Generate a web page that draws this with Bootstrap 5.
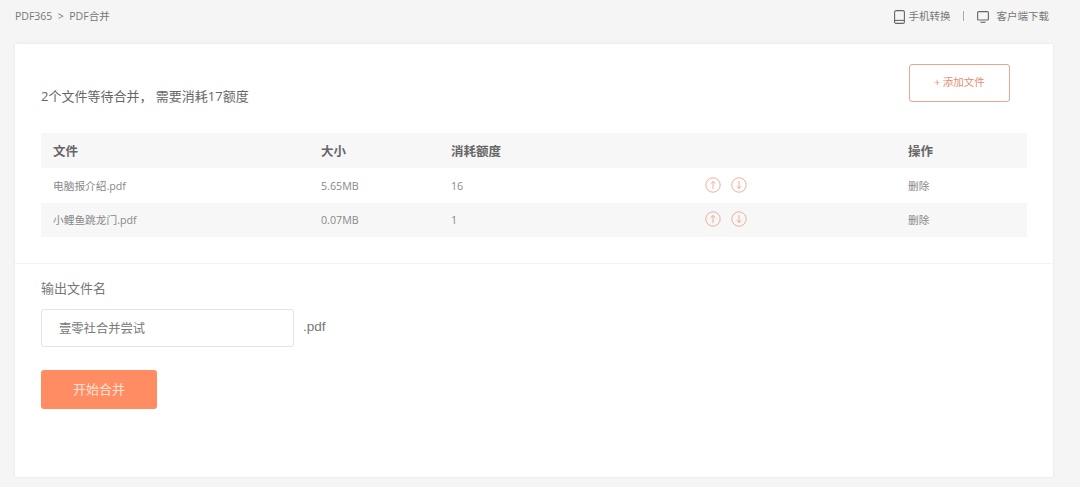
<!DOCTYPE html>
<html lang="zh-CN">
<head>
  <meta charset="UTF-8">
  <title>PDF合并</title>
  <meta name="viewport" content="width=device-width, initial-scale=1">
  <link href="https://cdn.jsdelivr.net/npm/bootstrap@5.3.0/dist/css/bootstrap.min.css" rel="stylesheet">
  <style>
    body { background: #f5f5f5; color: #666; font-family: "Open Sans", "Noto Sans CJK SC", sans-serif; font-size: 11px; height: 487px; overflow: hidden; }
    .top-bar { height: 44px; padding: 0 31px 10px 15px; }
    .top-bar a { color: #777; text-decoration: none; font-size: 10.5px; }
    .crumb { font-size: 10.5px; color: #777; }
    .top-sep { width: 1px; height: 10px; background: #aaa; margin: 0 13px 2px 12px; }
    .merge-panel { margin: 0 27px 0 15px; height: 433px; border: 0; border-radius: 2px; box-shadow: 0 0 3px rgba(0, 0, 0, .08); }
    .panel-top { height: 220px; padding: 20px 26px 0; border-bottom: 1px solid #f3f3f3; }
    .panel-head { height: 69px; }
    .count-text { font-size: 13px; color: #666; padding-top: 23px; }
    .add-btn { width: 101px; height: 38px; margin-right: 17px; border: 1px solid #e8a78c; border-radius: 3px; background: #fff; color: #e58d6f; font-size: 10.5px; padding: 0; }
    .file-table { table-layout: fixed; width: 986px; margin: 0; }
    .file-table th, .file-table td { border: 0; padding: 0 0 0 12px; vertical-align: middle; background: transparent; box-shadow: none; }
    .file-table th { height: 35px; padding-top: 3px; font-size: 12.5px; font-weight: 700; color: #666; }
    .file-table td { height: 35px; padding-top: 1px; font-size: 10.7px; color: #888; }
    .file-table .row-alt td { height: 34px; }
    .file-table thead tr, .file-table .row-alt { background: #f7f7f7; }
    .arrow-icons { gap: 10px; margin-top: -3px; }
    .panel-bottom { padding: 14px 26px 0; }
    .out-label { font-size: 13px; color: #777; line-height: 20px; margin-bottom: 11px; }
    .name-input { width: 253px; height: 38px; border: 1px solid #e4e4e4; border-radius: 3px; padding: 0 17px; font-size: 12.3px; color: #777; font-family: inherit; }
    .name-input:focus { box-shadow: none; border-color: #e4e4e4; color: #777; }
    .ext-text { font-family: "Liberation Sans", sans-serif; font-size: 13.5px; color: #777; margin: 0 0 2px 9px; }
    .start-btn { width: 116px; height: 39px; margin-top: 23px; border: 0; border-radius: 3px; background: #ff8c62; color: #ffe3d6; font-size: 13px; padding: 0; }
    .start-btn:hover { background: #ff8c62; color: #ffe3d6; }
  </style>
</head>
<body>
  <div class="top-bar d-flex align-items-center justify-content-between">
    <div class="crumb">PDF365 &nbsp;&gt;&nbsp; PDF合并</div>
    <div class="d-flex align-items-center">
      <a href="#" class="d-flex align-items-center gap-1">
        <svg width="11" height="14" viewBox="0 0 11 14" fill="none" stroke="#666" stroke-width="1.1"><rect x=".6" y=".6" width="9.8" height="12.8" rx="1.5"/><path d="M.6 10.4h9.8"/></svg>
        手机转换
      </a>
      <span class="top-sep"></span>
      <a href="#" class="d-flex align-items-center gap-2">
        <svg width="12" height="12" viewBox="0 0 12 12" fill="none" stroke="#666" stroke-width="1.1"><rect x=".6" y=".6" width="10.8" height="8.4" rx="1"/><path d="M3.5 11.3h5"/></svg>
        客户端下载
      </a>
    </div>
  </div>

  <div class="card merge-panel">
    <div class="panel-top">
      <div class="panel-head d-flex justify-content-between align-items-start">
        <div class="count-text">2个文件等待合并， 需要消耗17额度</div>
        <button type="button" class="btn add-btn">+ 添加文件</button>
      </div>
      <table class="table file-table">
        <colgroup>
          <col style="width:268px"><col style="width:130px"><col style="width:254px"><col style="width:203px"><col style="width:131px">
        </colgroup>
        <thead>
          <tr><th>文件</th><th>大小</th><th>消耗额度</th><th></th><th>操作</th></tr>
        </thead>
        <tbody>
          <tr>
            <td>电脑报介绍.pdf</td><td>5.65MB</td><td>16</td>
            <td><div class="d-flex arrow-icons">
              <svg width="16" height="16" viewBox="0 0 16 16" fill="none" stroke="#eab09a"><circle cx="8" cy="8" r="7.2"/><path d="M8 12V4.5M5.6 6.8 8 4.5l2.4 2.3"/></svg>
              <svg width="16" height="16" viewBox="0 0 16 16" fill="none" stroke="#eab09a"><circle cx="8" cy="8" r="7.2"/><path d="M8 4v7.5M5.6 9.2 8 11.5l2.4-2.3"/></svg>
            </div></td>
            <td>删除</td>
          </tr>
          <tr class="row-alt">
            <td>小鲤鱼跳龙门.pdf</td><td>0.07MB</td><td>1</td>
            <td><div class="d-flex arrow-icons">
              <svg width="16" height="16" viewBox="0 0 16 16" fill="none" stroke="#eab09a"><circle cx="8" cy="8" r="7.2"/><path d="M8 12V4.5M5.6 6.8 8 4.5l2.4 2.3"/></svg>
              <svg width="16" height="16" viewBox="0 0 16 16" fill="none" stroke="#eab09a"><circle cx="8" cy="8" r="7.2"/><path d="M8 4v7.5M5.6 9.2 8 11.5l2.4-2.3"/></svg>
            </div></td>
            <td>删除</td>
          </tr>
        </tbody>
      </table>
    </div>
    <div class="panel-bottom">
      <div class="out-label">输出文件名</div>
      <div class="d-flex align-items-center">
        <input type="text" class="form-control name-input" value="壹零社合并尝试">
        <span class="ext-text">.pdf</span>
      </div>
      <button type="button" class="btn start-btn d-block">开始合并</button>
    </div>
  </div>
  <script src="https://cdn.jsdelivr.net/npm/bootstrap@5.3.0/dist/js/bootstrap.bundle.min.js"></script>
</body>
</html>
